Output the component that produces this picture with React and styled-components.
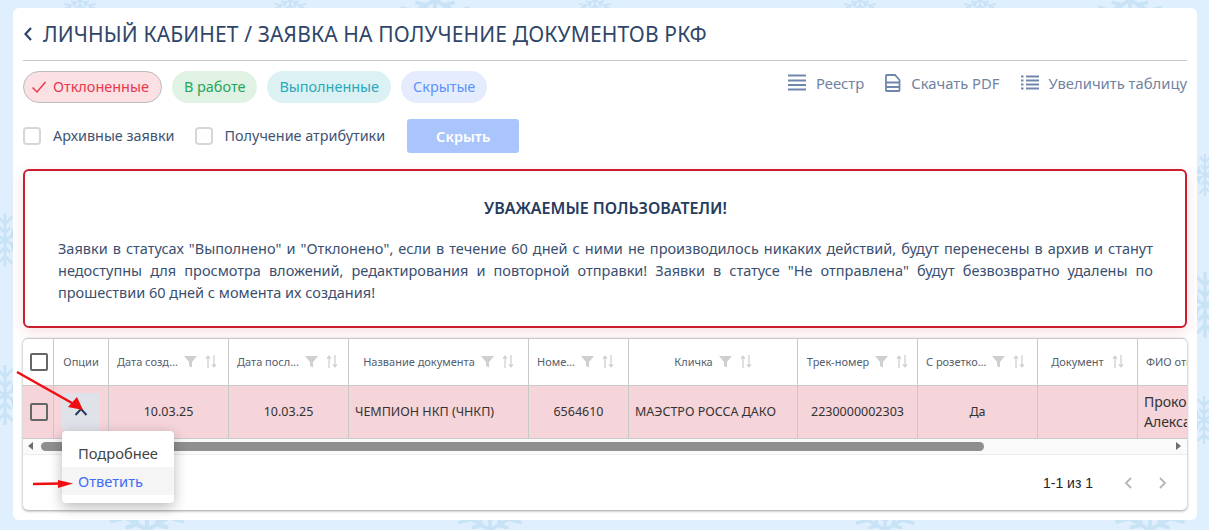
import React from "react";
import styled, { createGlobalStyle } from "styled-components";

const Global = createGlobalStyle`
  html, body { margin: 0; padding: 0; }
  body { background: #e0effd; font-family: "Noto Sans", sans-serif; color: #253c5e; overflow: hidden; }
  * { box-sizing: border-box; }
`;

const Page = styled.div`
  position: relative;
  width: 1209px;
  height: 530px;
  padding: 8px 12px 10px 13px;
  overflow: hidden;
`;
const Flakes = styled.svg`
  position: absolute;
  inset: 0;
  width: 1209px;
  height: 530px;
  color: #c8e2f6;
`;
const Card = styled.main`
  position: relative;
  height: 512px;
  background: #fff;
  border-radius: 6px;
  padding: 10px;
  display: flex;
  flex-direction: column;
`;
const TitleRow = styled.header`
  display: flex;
  align-items: center;
  height: 43px;
  border-bottom: 1px solid #c9c9c9;
  padding-bottom: 9px;
  gap: 10px;
`;
const Title = styled.h1`
  margin: 0;
  font-size: 21px;
  letter-spacing: 0.14px;
  font-weight: 400;
  color: #2f4669;
  white-space: nowrap;
`;
const FilterRow = styled.div`
  display: flex;
  justify-content: space-between;
  align-items: center;
  margin-top: 10px;
  height: 32px;
`;
const Chips = styled.div`
  display: flex;
  gap: 10px;
`;
const Chip = styled.div`
  height: 32px;
  border-radius: 16px;
  padding: 0 12px 0 ${p => p.$active ? 7 : 12}px;
  display: flex;
  align-items: center;
  gap: 6px;
  font-size: 14.45px;
  color: ${p => p.$fg};
  background: ${p => p.$bg};
  border: ${p => p.$active ? "1px solid #bdbdbd" : "none"};
`;
const Actions = styled.div`
  display: flex;
  gap: 21px;
  padding-bottom: 8px;
`;
const Action = styled.div`
  display: flex;
  align-items: center;
  gap: 10px;
  font-size: 14.8px;
  color: #72839f;
  white-space: nowrap;
`;
const CheckRow = styled.div`
  display: flex;
  align-items: center;
  margin-top: 16px;
  height: 34px;
`;
const Check = styled.label`
  display: flex;
  align-items: center;
  gap: 12px;
  margin-right: 20px;
  font-size: 14.4px;
  color: #3f5473;
`;
const Box = styled.span`
  display: block;
  width: 18px;
  height: 18px;
  border: 2px solid #d7d7d7;
  border-radius: 4px;
  background: #fff;
`;
const HideButton = styled.button`
  width: 112px;
  height: 34px;
  margin-left: 2px;
  border: none;
  border-radius: 3px;
  background: #a9c5fb;
  color: #fff;
  font: 600 14.5px "Noto Sans", sans-serif;
`;
const Notice = styled.section`
  margin-top: 16px;
  height: 159px;
  border: 2px solid #cb1f30;
  border-radius: 6px;
  background: #fff;
  padding: 26px 32px 0 33px;
  box-shadow: 0 4px 14px rgba(203, 31, 48, 0.14);
`;
const NoticeTitle = styled.h2`
  margin: 0 0 18px;
  font-size: 16px;
  line-height: 22px;
  font-weight: 600;
  text-align: center;
  color: #253c5e;
`;
const NoticeText = styled.p`
  margin: 0;
  font-size: 14.5px;
  line-height: 22px;
  text-align: justify;
  color: #3a4f70;
`;
const TableCard = styled.section`
  margin-top: 10px;
  height: 173px;
  border-radius: 5px;
  background: #fff;
  box-shadow: 0 1px 3px rgba(0, 0, 0, 0.4);
  border-top: 1px solid #c9c9c9;
  display: flex;
  flex-direction: column;
  overflow: hidden;
`;
const Grid = styled.div`
  display: grid;
  grid-template-columns: 31px 55px 120px 120px 180px 100px 169px 120px 120px 100px 60px;
  grid-template-rows: 47px 52px;
  border-bottom: 1px solid #c9c9c9;
  flex: none;
  overflow: hidden;
`;
const HeadCell = styled.div`
  display: flex;
  align-items: center;
  justify-content: ${p => p.$left ? "flex-start" : "center"};
  padding: 0 8px;
  min-width: 0;
  font-size: 11px;
  color: #55606e;
  border-right: 1px solid #c9c9c9;
  border-bottom: 1px solid #c9c9c9;
  white-space: nowrap;
  overflow: hidden;
  &:nth-child(11) { border-right: none; }
`;
const HeadCheckCell = styled(HeadCell)`
  padding: 0 0 0 7px;
  justify-content: flex-start;
`;
const Cell = styled.div`
  display: flex;
  align-items: center;
  justify-content: ${p => p.$left ? "flex-start" : "center"};
  padding: 0 6px;
  min-width: 0;
  background: #f5d4da;
  font-size: 12.5px;
  color: #333;
  border-right: 1px solid #c9c9c9;
  white-space: nowrap;
  overflow: hidden;
  &:last-child { border-right: none; }
`;
const SelectCell = styled(Cell)`
  padding: 0 0 0 7px;
  justify-content: flex-start;
`;
const TableBox = styled.span`
  display: block;
  flex: none;
  width: 18px;
  height: 18px;
  border: 2px solid #666;
  border-radius: 2px;
  background: ${p => p.$head ? "#fff" : "transparent"};
`;
const OptionButton = styled.div`
  width: 38px;
  height: 38px;
  border-radius: 3px;
  background: #dfe3e9;
  display: flex;
  align-items: center;
  justify-content: center;
  color: #253c5e;
`;
const Person = styled.span`
  white-space: pre;
  font-size: 14px;
  line-height: 20px;
`;
const Scrollbar = styled.div`
  height: 16px;
  flex: none;
  background: #fafafa;
  border-bottom: 1px solid #ececec;
  display: flex;
  align-items: center;
  padding: 0 6px 0 5px;
  gap: 8px;
`;
const Thumb = styled.div`
  width: 943px;
  height: 9px;
  border-radius: 5px;
  background: #8f8f8f;
`;
const Arrow = styled.span`
  width: 0;
  height: 0;
  border-top: 4px solid transparent;
  border-bottom: 4px solid transparent;
  ${p => p.$right
    ? "border-left: 5px solid #6d6d6d; margin-left: auto;"
    : "border-right: 5px solid #6d6d6d;"}
`;
const Footer = styled.div`
  flex: 1;
  display: flex;
  align-items: center;
  justify-content: flex-end;
  padding: 1px 15px 0 0;
  gap: 25px;
  font: 14px "Liberation Sans", sans-serif;
  color: #222;
`;
const Pager = styled.div`
  display: flex;
  gap: 14px;
  color: #b5b5b5;
`;
const Menu = styled.ul`
  position: absolute;
  left: 49px;
  top: 423px;
  width: 112px;
  height: 72px;
  margin: 0;
  padding: 8px 0;
  list-style: none;
  background: #fff;
  border-radius: 4px;
  box-shadow: 0 4px 14px rgba(0, 0, 0, 0.28);
`;
const MenuItem = styled.li`
  height: 28px;
  display: flex;
  align-items: center;
  padding: 0 16px;
  font-size: 14.7px;
  color: ${p => p.$active ? "#3f6df6" : "#444"};
  background: ${p => p.$active ? "#f5f5f5" : "transparent"};
`;
const Annotation = styled.svg`
  position: absolute;
  left: 0;
  top: 0;
  width: 1209px;
  height: 530px;
  pointer-events: none;
`;

const FunnelIcon = () => (
  <svg width="13" height="13" viewBox="0 0 13 13" style={{ flex: "none", marginLeft: 6 }}>
    <path d="M0 1h13L8 7v5.5L5 11V7z" fill="#cfcfcf" />
  </svg>
);
const SortIcon = () => (
  <svg width="12" height="13" viewBox="0 0 12 13" style={{ flex: "none", marginLeft: 8 }}>
    <path d="M3 13V1.5M1 3.6 3 1.2l2 2.4M9 0v11.5M7 9.4l2 2.4 2-2.4" fill="none" stroke="#cfcfcf" strokeWidth="1.3" />
  </svg>
);

const Flake = ({ x, y, s }) => (
  <g transform={`translate(${x} ${y}) scale(${s})`} stroke="currentColor" strokeWidth="3" fill="none">
    {[0, 60, 120].map(a => (
      <g key={a} transform={`rotate(${a})`}>
        <path d="M0 -30V30M-8 -26 0 -18 8 -26M-8 26 0 18 8 26M-6 -14 0 -8 6 -14M-6 14 0 8 6 14" />
      </g>
    ))}
  </g>
);

const flakes = [
  [80, 0, 0.6], [290, 0, 0.6], [435, 0, 1.3], [595, 0, 0.6], [860, 0, 0.6], [980, 0, 0.6], [1130, 0, 1.2],
  [5, 240, 0.9], [5, 395, 1],
  [1205, 175, 0.7], [1205, 305, 1.1], [1204, 420, 0.8],
  [147, 530, 1.4], [490, 530, 1.2], [885, 530, 1.1], [1150, 530, 1.3],
];

const heads = [
  ["Дата созд…", 1], ["Дата посл…", 1], ["Название документа", 0], ["Номе…", 1],
  ["Кличка", 0], ["Трек-номер", 0], ["С розетко…", 1],
];

export default function App() {
  return (
    <Page>
      <Global />
      <Flakes viewBox="0 0 1209 530" aria-hidden="true">
        {flakes.map(([x, y, s]) => <Flake key={`${x}-${y}`} x={x} y={y} s={s} />)}
      </Flakes>
      <Card>
        <TitleRow>
          <svg width="10" height="16" viewBox="0 0 10 16"><path d="M8 2 2.5 8 8 14" fill="none" stroke="#2f4669" strokeWidth="2.2" /></svg>
          <Title>ЛИЧНЫЙ КАБИНЕТ / ЗАЯВКА НА ПОЛУЧЕНИЕ ДОКУМЕНТОВ РКФ</Title>
        </TitleRow>
        <FilterRow>
          <Chips>
            <Chip $active $fg="#e8394d" $bg="#fbe0e4">
              <svg width="16" height="14" viewBox="0 0 16 14"><path d="M1.5 7.5 6 12 14.5 2" fill="none" stroke="#e8394d" strokeWidth="1.5" /></svg>
              Отклоненные
            </Chip>
            <Chip $fg="#26a65b" $bg="#e0f2e4">В работе</Chip>
            <Chip $fg="#2aa9bb" $bg="#dcf1f4">Выполненные</Chip>
            <Chip $fg="#5d94fb" $bg="#e4ecfd">Скрытые</Chip>
          </Chips>
          <Actions>
            <Action>
              <svg width="18" height="17" viewBox="0 0 18 17"><path d="M0 1.5h18M0 6.5h18M0 11h18M0 15.5h18" stroke="#6f86ad" strokeWidth="2" /></svg>
              Реестр
            </Action>
            <Action>
              <svg width="16" height="18" viewBox="0 0 16 18"><path d="M1.5 1h8.5l4.5 5v10.5a.5.5 0 0 1-.5.5H1.5a.5.5 0 0 1-.5-.5V1.5zM1 8.5h14M1 13h14" fill="none" stroke="#6f86ad" strokeWidth="1.8" /></svg>
              Скачать PDF
            </Action>
            <Action>
              <svg width="18" height="15" viewBox="0 0 18 15"><path d="M0 1.5h2.5M0 5.5h2.5M0 9.5h2.5M0 13.5h2.5M5 1.5h13M5 5.5h13M5 9.5h13M5 13.5h13" stroke="#6f86ad" strokeWidth="1.8" /></svg>
              Увеличить таблицу
            </Action>
          </Actions>
        </FilterRow>
        <CheckRow>
          <Check><Box />Архивные заявки</Check>
          <Check><Box />Получение атрибутики</Check>
          <HideButton>Скрыть</HideButton>
        </CheckRow>
        <Notice>
          <NoticeTitle>УВАЖАЕМЫЕ ПОЛЬЗОВАТЕЛИ!</NoticeTitle>
          <NoticeText>
            Заявки в статусах "Выполнено" и "Отклонено", если в течение 60 дней с ними не производилось никаких действий, будут перенесены в архив и станут недоступны для просмотра вложений, редактирования и повторной отправки! Заявки в статусе "Не отправлена" будут безвозвратно удалены по прошествии 60 дней с момента их создания!
          </NoticeText>
        </Notice>
        <TableCard>
          <Grid>
            <HeadCheckCell><TableBox $head /></HeadCheckCell>
            <HeadCell>Опции</HeadCell>
            {heads.map(([t, left]) => (
              <HeadCell key={t} $left={!!left}><span>{t}</span><FunnelIcon /><SortIcon /></HeadCell>
            ))}
            <HeadCell>Документ<SortIcon /></HeadCell>
            <HeadCell $left>ФИО отправителя</HeadCell>
            <SelectCell><TableBox /></SelectCell>
            <Cell><OptionButton><svg width="14" height="9" viewBox="0 0 14 9"><path d="M1.5 8 7 2l5.5 6" fill="none" stroke="currentColor" strokeWidth="2" /></svg></OptionButton></Cell>
            <Cell>10.03.25</Cell>
            <Cell>10.03.25</Cell>
            <Cell $left>ЧЕМПИОН НКП (ЧНКП)</Cell>
            <Cell>6564610</Cell>
            <Cell $left>МАЭСТРО РОССА ДАКО</Cell>
            <Cell>2230000002303</Cell>
            <Cell>Да</Cell>
            <Cell />
            <Cell $left><Person>{"Прокопенко\nАлександр"}</Person></Cell>
          </Grid>
          <Scrollbar><Arrow /><Thumb /><Arrow $right /></Scrollbar>
          <Footer>
            <span>1-1 из 1</span>
            <Pager>
              <svg width="20" height="20" viewBox="0 0 20 20"><path d="M13 5 8 10l5 5" fill="none" stroke="currentColor" strokeWidth="1.8" /></svg>
              <svg width="20" height="20" viewBox="0 0 20 20"><path d="M8 5l5 5-5 5" fill="none" stroke="currentColor" strokeWidth="1.8" /></svg>
            </Pager>
          </Footer>
        </TableCard>
        <Menu>
          <MenuItem>Подробнее</MenuItem>
          <MenuItem $active>Ответить</MenuItem>
        </Menu>
      </Card>
      <Annotation viewBox="0 0 1209 530" aria-hidden="true">
        <path d="M17 372 72 403" stroke="#f00d12" strokeWidth="2.5" />
        <path d="M83 410 68 407 77 397z" fill="#f00d12" />
        <path d="M33 484 60 483.5" stroke="#f00d12" strokeWidth="2.5" />
        <path d="M73 483.5 58 480v8z" fill="#f00d12" />
      </Annotation>
    </Page>
  );
}
